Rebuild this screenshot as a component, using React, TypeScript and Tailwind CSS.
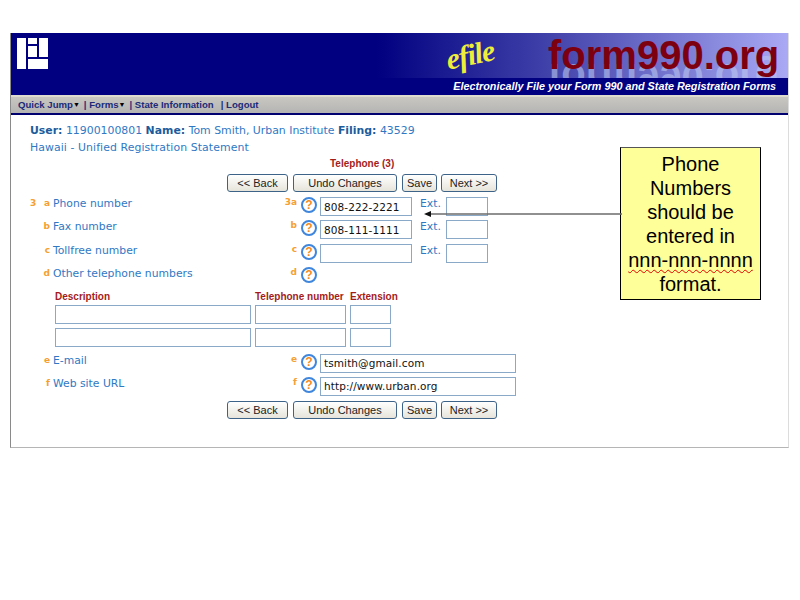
const verdana = "font-['DejaVu_Sans',sans-serif]";

function Help() {
  return (
    <span className="flex h-[16px] w-[16px] shrink-0 items-center justify-center rounded-full border-2 border-[#3f86dc] bg-white font-['Liberation_Sans',sans-serif] text-[12px] font-bold leading-none text-[#f58a1f]">
      ?
    </span>
  );
}

function Field({ value = '', w }: { value?: string; w: string }) {
  return (
    <input
      readOnly
      value={value}
      className={`h-[19px] shrink-0 border border-[#8aa8c8] bg-white px-[3px] font-['DejaVu_Sans',sans-serif] text-[10.5px] tracking-[0.1px] text-[#111] outline-none ${w}`}
    />
  );
}

function Row({
  num = '',
  letter,
  label,
  mark,
  children,
}: {
  num?: string;
  letter: string;
  label: string;
  mark: string;
  children: React.ReactNode;
}) {
  return (
    <div className="ml-[19px] flex h-[23.4px] items-start">
      <div className="flex w-[20px] shrink-0 justify-between pt-[1px] text-[9px] font-bold leading-[11px] text-[#f5a032]">
        <span>{num}</span>
        <span>{letter}</span>
      </div>
      <div className="ml-[3px] flex w-[244px] shrink-0 justify-between">
        <span className="text-[10.8px] leading-[14px] text-[#2f78c4]">{label}</span>
        <span className="text-[9px] font-bold leading-[11px] text-[#f5a032]">{mark}</span>
      </div>
      <div className="ml-[4px] shrink-0">
        <Help />
      </div>
      <div className="ml-[3px] flex items-start">{children}</div>
    </div>
  );
}

function Ext() {
  return (
    <>
      <span className="ml-[8px] w-[26px] shrink-0 text-[10.8px] leading-[14px] text-[#2f78c4]">Ext.</span>
      <Field w="w-[42px]" />
    </>
  );
}

function Buttons() {
  const base =
    "h-[18px] rounded-[3px] border border-[#3d6488] bg-linear-to-b from-white to-[#e6e4da] font-['Liberation_Sans',sans-serif] text-[11px] leading-none text-[#222]";
  return (
    <div className="ml-[216px] flex">
      <button className={`${base} w-[61px]`}>{'<< Back'}</button>
      <button className={`${base} ml-[5px] w-[104px]`}>Undo Changes</button>
      <button className={`${base} ml-[5px] w-[35px]`}>Save</button>
      <button className={`${base} ml-[4px] w-[56px]`}>{'Next >>'}</button>
    </div>
  );
}

export default function App() {
  return (
    <div className={`relative h-[600px] w-[800px] bg-white pt-[33px] ${verdana}`}>
      <div className="ml-[10px] h-[415px] w-[779px] border-b border-l border-r border-b-[#b5b5b5] border-l-[#8a8a8a] border-r-[#dcdcdc]">
        {/* banner */}
        <div className="relative h-[45px] overflow-hidden bg-[linear-gradient(to_right,#000080_0%,#000080_47%,#4a4ab0_72%,#a9a9f5_100%)]">
          <svg width="33" height="32" viewBox="0 0 33 32" className="absolute left-[6px] top-[5px]">
            <g fill="#fff">
              <rect x="0" y="0" width="9" height="31" />
              <rect x="11" y="0" width="9" height="6" />
              <rect x="11" y="8" width="9" height="11" />
              <rect x="22" y="0" width="9" height="19" />
              <rect x="11" y="21" width="20" height="10" />
            </g>
          </svg>
          <span className="absolute left-[435px] top-[3px] -rotate-12 font-['Liberation_Serif',serif] text-[30px] font-bold italic leading-[38px] tracking-[-1px] text-[#eeee3a]">
            efile
          </span>
          <span className="absolute left-[537px] top-[22px] -scale-y-100 font-['Liberation_Sans',sans-serif] text-[40px] font-bold leading-[46px] text-[#b9c4ee] opacity-60">
            form990.org
          </span>
          <span className="absolute left-[537px] top-[-1px] font-['Liberation_Sans',sans-serif] text-[40px] font-bold leading-[46px] text-[#7d0010]">
            form990.org
          </span>
        </div>
        <div className="h-[17px] bg-[#000080] pr-[12px] text-right font-['Liberation_Sans',sans-serif] text-[10.8px] font-bold italic leading-[16px] text-white">
          Electronically File your Form 990 and State Registration Forms
        </div>

        {/* menu */}
        <div className="flex h-[20px] items-center border-b-2 border-t-2 border-b-[#000070] border-t-[#dedccf] bg-linear-to-b from-[#c9c7c0] to-[#b4b4b4] pl-[7px] font-['Liberation_Sans',sans-serif] text-[9.6px] font-bold text-[#1c2a78]">
          <span>Quick Jump</span>
          <span className="text-[7px] text-black">▼</span>
          <span className="ml-[4px]">| Forms</span>
          <span className="text-[7px] text-black">▼</span>
          <span className="ml-[4px]">| State Information</span>
          <span className="ml-[7px]">| Logout</span>
        </div>

        {/* filing info */}
        <div className="ml-[19px] mt-[7px] text-[10.9px] leading-[17px] text-[#2f78c4]">
          <div>
            <b className="text-[#1d5c9c]">User:</b> 11900100801 <b className="text-[#1d5c9c]">Name:</b> Tom Smith, Urban
            Institute <b className="text-[#1d5c9c]">Filing:</b> 43529
          </div>
          <div className="tracking-[0.08px]">Hawaii - Unified Registration Statement</div>
        </div>

        <div className="ml-[319px] h-[18px] font-['Liberation_Sans',sans-serif] text-[10px] font-bold leading-[16px] text-[#a51c1c]">
          Telephone (3)
        </div>
        <Buttons />

        <div className="mt-[5px]">
          <Row num="3" letter="a" label="Phone number" mark="3a">
            <Field value="808-222-2221" w="w-[92px]" />
            <Ext />
          </Row>
          <Row letter="b" label="Fax number" mark="b">
            <Field value="808-111-1111" w="w-[92px]" />
            <Ext />
          </Row>
          <Row letter="c" label="Tollfree number" mark="c">
            <Field w="w-[92px]" />
            <Ext />
          </Row>
          <Row letter="d" label="Other telephone numbers" mark="d">
            <span />
          </Row>
        </div>

        {/* other numbers */}
        <div className="ml-[44px] flex h-[13px] font-['Liberation_Sans',sans-serif] text-[10px] font-bold leading-[11px] text-[#a51c1c]">
          <span className="w-[200px]">Description</span>
          <span className="w-[95px]">Telephone number</span>
          <span>Extension</span>
        </div>
        <div className="ml-[44px] mt-[1px] flex flex-col gap-[4px]">
          {[0, 1].map((i) => (
            <div key={i} className="flex gap-[4px]">
              <Field w="w-[196px]" />
              <Field w="w-[91px]" />
              <Field w="w-[41px]" />
            </div>
          ))}
        </div>

        <div className="mt-[7px]">
          <Row letter="e" label="E-mail" mark="e">
            <Field value="tsmith@gmail.com" w="w-[196px]" />
          </Row>
          <Row letter="f" label="Web site URL" mark="f">
            <Field value="http://www.urban.org" w="w-[196px]" />
          </Row>
        </div>
        <div className="mt-[1px]">
          <Buttons />
        </div>
      </div>

      {/* annotation callout */}
      <div className="absolute left-[620px] top-[147px] flex h-[153px] w-[141px] flex-col items-center justify-center border border-black border-t-[#555] bg-[#ffff99] text-center font-['Liberation_Sans',sans-serif] text-[20px] leading-[24px] text-black">
        <span>Phone</span>
        <span>Numbers</span>
        <span>should be</span>
        <span>entered in</span>
        <span className="underline decoration-[#e00000] decoration-wavy decoration-1 underline-offset-2">nnn-nnn-nnnn</span>
        <span>format.</span>
      </div>
      <svg width="200" height="10" viewBox="0 0 200 10" className="absolute left-[424px] top-[209px]">
        <line x1="6" y1="5" x2="198" y2="5" stroke="#6b6b6b" strokeWidth="1.5" />
        <polygon points="0,5 7,2 7,8" fill="#111" />
      </svg>
    </div>
  );
}
